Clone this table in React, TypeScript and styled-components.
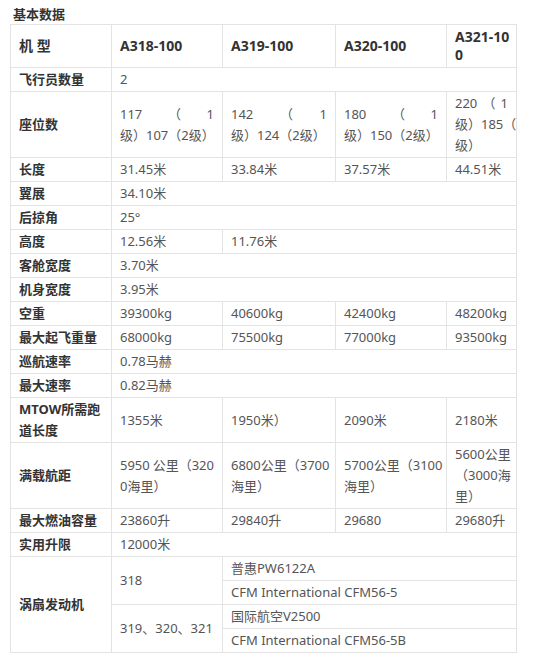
import * as React from 'react';
import styled, { createGlobalStyle } from 'styled-components';

const GlobalStyle = createGlobalStyle`
  body {
    margin: 0;
    background: #fff;
    font-family: 'Noto Sans', 'Noto Sans CJK SC', sans-serif;
  }
`;

const Page = styled.div`
  padding: 0 0 0 10px;
`;

const Title = styled.div`
  padding: 5px 0 0 3px;
  line-height: 19px;
  font-size: 13px;
  font-weight: 600;
  color: #333;
`;

const Table = styled.table`
  width: 507px;
  table-layout: fixed;
  border-collapse: collapse;
  font-size: 13px;
  color: #555;
`;

const Col = styled.col<{ $w: number }>`
  width: ${({ $w }) => $w}px;
`;

const Cell = styled.td<{ $label?: boolean }>`
  border: 1px solid #e3e3e3;
  padding: 1px 8px;
  line-height: 21px;
  vertical-align: middle;
  overflow: hidden;
  white-space: nowrap;
  font-weight: ${({ $label }) => ($label ? 700 : 400)};
  color: ${({ $label }) => ($label ? '#333' : '#555')};
`;

const HeadCell = styled.th`
  border: 1px solid #e3e3e3;
  padding: 3px 8px;
  line-height: 18px;
  font-size: 14px;
  font-weight: 700;
  color: #333;
  text-align: left;
  vertical-align: middle;
  overflow: hidden;
  white-space: nowrap;
`;

const Line = styled.div<{ $spread?: boolean }>`
  display: ${({ $spread }) => ($spread ? 'flex' : 'block')};
  justify-content: space-between;
`;

type LineData = string | string[];
type CellData = {
  lines: LineData[];
  span?: number;
  rows?: number;
  label?: boolean;
};

// a plain string is one line; an array of lines may hold spread (justified) lines
const c = (text: string | LineData[], span?: number, rows?: number): CellData => ({
  lines: typeof text === 'string' ? [text] : text,
  span,
  rows,
});

const lbl = (text: string | string[], rows?: number): CellData => ({
  lines: Array.isArray(text) ? text : [text],
  rows,
  label: true,
});

const colWidths = [101, 111, 113, 111, 70];

const header: LineData[][] = [['机  型'], ['A318-100'], ['A319-100'], ['A320-100'], ['A321-10', '0']];

const rows: CellData[][] = [
  [lbl('飞行员数量'), c('2', 4)],
  [
    lbl('座位数'),
    c([['117', '（', '1'], '级）107（2级）']),
    c([['142', '（', '1'], '级）124（2级）']),
    c([['180', '（', '1'], '级）150（2级）']),
    c([['220', '（', '1'], '级）185（2级）', '级）']),
  ],
  [lbl('长度'), c('31.45米'), c('33.84米'), c('37.57米'), c('44.51米')],
  [lbl('翼展'), c('34.10米', 4)],
  [lbl('后掠角'), c('25°', 4)],
  [lbl('高度'), c('12.56米'), c('11.76米', 3)],
  [lbl('客舱宽度'), c('3.70米', 4)],
  [lbl('机身宽度'), c('3.95米', 4)],
  [lbl('空重'), c('39300kg'), c('40600kg'), c('42400kg'), c('48200kg')],
  [lbl('最大起飞重量'), c('68000kg'), c('75500kg'), c('77000kg'), c('93500kg')],
  [lbl('巡航速率'), c('0.78马赫', 4)],
  [lbl('最大速率'), c('0.82马赫', 4)],
  [lbl(['MTOW所需跑', '道长度']), c('1355米'), c('1950米）'), c('2090米'), c('2180米')],
  [
    lbl('满载航距'),
    c([['5950', '公里（320'], '0海里）']),
    c(['6800公里（3700', '海里）']),
    c(['5700公里（3100', '海里）']),
    c(['5600公里', '（3000海', '里）']),
  ],
  [lbl('最大燃油容量'), c('23860升'), c('29840升'), c('29680'), c('29680升')],
  [lbl('实用升限'), c('12000米', 4)],
  [lbl('涡扇发动机', 4), c('318', 1, 2), c('普惠PW6122A', 3)],
  [c('CFM International CFM56-5', 3)],
  [c('319、320、321', 1, 2), c('国际航空V2500', 3)],
  [c('CFM International CFM56-5B', 3)],
];

const renderLines = (lines: LineData[]) =>
  lines.length === 1 && typeof lines[0] === 'string'
    ? lines[0]
    : lines.map((line, i) =>
        Array.isArray(line) ? (
          <Line key={i} $spread>
            {line.map((t, j) => (
              <span key={j}>{t}</span>
            ))}
          </Line>
        ) : (
          <Line key={i}>{line}</Line>
        )
      );

const App = () => {
  return (
    <Page>
      <GlobalStyle />
      <Title>基本数据</Title>
      <Table>
        <colgroup>
          {colWidths.map((w, i) => (
            <Col key={i} $w={w} />
          ))}
        </colgroup>
        <thead>
          <tr>
            {header.map((lines, i) => (
              <HeadCell key={i}>{renderLines(lines)}</HeadCell>
            ))}
          </tr>
        </thead>
        <tbody>
          {rows.map((row, i) => (
            <tr key={i}>
              {row.map((cell, j) => (
                <Cell key={j} colSpan={cell.span} rowSpan={cell.rows} $label={cell.label}>
                  {renderLines(cell.lines)}
                </Cell>
              ))}
            </tr>
          ))}
        </tbody>
      </Table>
    </Page>
  );
};

export default App;
